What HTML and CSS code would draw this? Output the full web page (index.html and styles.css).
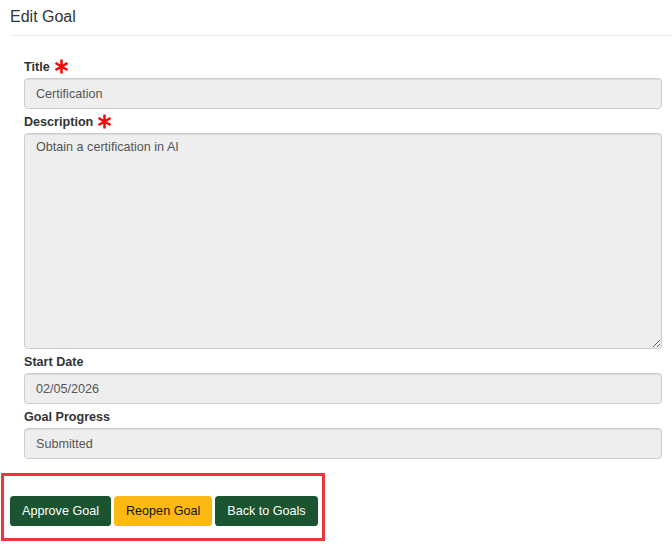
FILE: index.html
```html
<!DOCTYPE html>
<html lang="en">

<head>
  <meta charset="UTF-8">
  <meta name="viewport" content="width=device-width, initial-scale=1.0">
  <title>Edit Goal</title>
  <link rel="stylesheet" href="styles.css">
</head>

<body>
  <h4 class="page-title">Edit Goal</h4>
  <hr class="title-line">

  <form class="goal-form">
    <div class="form-group">
      <label for="title">Title
        <svg class="required" viewBox="0 0 14 14" width="15" height="15">
          <path d="M7 0.5V13.5M1.4 3.75L12.6 10.25M1.4 10.25L12.6 3.75" stroke="#f00" stroke-width="2.3" fill="none" />
        </svg>
      </label>
      <input type="text" id="title" class="form-control" value="Certification" disabled>
    </div>

    <div class="form-group">
      <label for="description">Description
        <svg class="required" viewBox="0 0 14 14" width="15" height="15">
          <path d="M7 0.5V13.5M1.4 3.75L12.6 10.25M1.4 10.25L12.6 3.75" stroke="#f00" stroke-width="2.3" fill="none" />
        </svg>
      </label>
      <textarea id="description" class="form-control description" disabled>Obtain a certification in AI</textarea>
    </div>

    <div class="form-group">
      <label for="startDate">Start Date</label>
      <input type="text" id="startDate" class="form-control" value="02/05/2026" disabled>
    </div>

    <div class="form-group">
      <label for="progress">Goal Progress</label>
      <input type="text" id="progress" class="form-control" value="Submitted" disabled>
    </div>
  </form>

  <div class="actions">
    <button class="btn btn-green">Approve Goal</button>
    <button class="btn btn-yellow">Reopen Goal</button>
    <button class="btn btn-green">Back to Goals</button>
  </div>
</body>

</html>
```

FILE: styles.css
```css
body {
  font-family: "Liberation Sans", Arial, sans-serif;
  font-size: 12.6px;
  color: #333;
  margin: 0;
  padding: 0;
  background-color: #fff;
}

.page-title {
  font-size: 16px;
  font-weight: normal;
  margin: 0;
  padding: 8px 0 0 10px;
  line-height: 18px;
  height: 27px;
}

.title-line {
  border: none;
  border-top: 1px solid #eee;
  margin: 0 0 0 10px;
}

.goal-form {
  padding: 19px 10px 0 24px;
}

.form-group {
  margin-bottom: 1px;
}

.form-group label {
  display: flex;
  align-items: center;
  gap: 4px;
  font-weight: bold;
  line-height: 19px;
  height: 19px;
  padding-top: 3px;
  margin-bottom: 1px;
}

.required {
  margin-top: -3px;
}

.form-control {
  display: block;
  box-sizing: border-box;
  width: 100%;
  height: 31px;
  padding: 5px 11px;
  font-family: inherit;
  font-size: 12.6px;
  color: #555;
  background-color: #eee;
  border: 1px solid #ccc;
  border-radius: 3.6px;
  box-shadow: inset 0 1px 1px rgba(0, 0, 0, 0.075);
  opacity: 1;
}

.description {
  height: 216px;
  padding-top: 4px;
  line-height: 18px;
  resize: vertical;
}

.actions {
  display: flex;
  width: fit-content;
  gap: 3px;
  margin: 14px 0 0 1px;
  padding: 20px 4px 12px 6px;
  border: 3px solid #e8383d;
}

.btn {
  height: 30px;
  padding: 0 11px;
  font-family: inherit;
  font-size: 12.6px;
  border: 1px solid transparent;
  border-radius: 3.6px;
  cursor: pointer;
}

.btn-green {
  background-color: #1b5430;
  color: #fff;
}

.btn-yellow {
  background-color: #fdb913;
  color: #111;
}
```
